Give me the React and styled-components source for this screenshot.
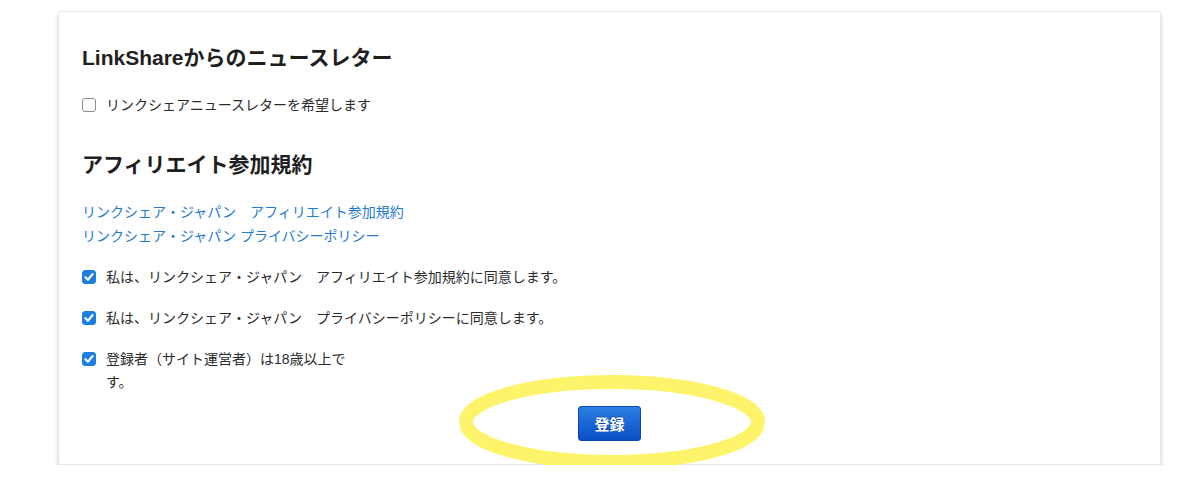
import React from "react";
import styled, { createGlobalStyle } from "styled-components";

const GlobalStyle = createGlobalStyle`
  body {
    margin: 0;
    background: #fff;
    font-family: "Liberation Sans", "Noto Sans CJK JP", sans-serif;
    color: #222;
  }
`;

const Page = styled.div`
  padding: 11px 39px 0 58px;
`;

const Card = styled.section`
  position: relative;
  height: 454px;
  box-sizing: border-box;
  padding: 31px 23px 0;
  background: #fff;
  border: 1px solid #e6e6e6;
  border-radius: 3px;
  box-shadow: 0 3px 4px rgba(0, 0, 0, 0.18);
`;

const Heading = styled.h2`
  margin: ${(p) => p.$top || 0}px 0 0;
  font-size: 21px;
  line-height: 30px;
  font-weight: 700;
  color: #1f1f1f;
`;

const Row = styled.label`
  display: flex;
  align-items: flex-start;
  gap: 10px;
  margin-top: ${(p) => p.$top || 18}px;
  font-size: 14px;
  line-height: 23px;
  color: #2b2b2b;
`;

const Box = styled.span`
  flex: none;
  width: 14px;
  height: 14px;
  margin-top: 4px;
  box-sizing: border-box;
  border-radius: 3px;
  display: flex;
  align-items: center;
  justify-content: center;
  background: ${(p) => (p.$checked ? "#1d7fe2" : "#fff")};
  border: 1px solid ${(p) => (p.$checked ? "#1d7fe2" : "#8a8a8a")};
`;

const LabelText = styled.span`
  max-width: ${(p) => p.$max || "none"};
`;

const Links = styled.div`
  margin-top: 20px;
  display: flex;
  flex-direction: column;
`;

const Link = styled.a`
  font-size: 14px;
  line-height: 24px;
  color: #1f7bd6;
  text-decoration: none;
`;

const Actions = styled.div`
  display: flex;
  justify-content: center;
  margin-top: 12px;
`;

const Annotated = styled.div`
  position: relative;
`;

const Button = styled.button`
  width: 63px;
  height: 35px;
  border: 1px solid #0b47b0;
  border-radius: 3px;
  background: linear-gradient(#2b7fe3, #0a4fc6);
  color: #fff;
  font-family: inherit;
  font-size: 15px;
  font-weight: 700;
  text-shadow: 0 -1px 0 rgba(0, 0, 0, 0.3);
  cursor: pointer;
`;

const Circle = styled.svg`
  position: absolute;
  left: -119px;
  top: -31px;
  pointer-events: none;
`;

function Check({ checked }) {
  return (
    <Box $checked={checked}>
      {checked && (
        <svg width="10" height="10" viewBox="0 0 9 9">
          <path d="M1.3 4.8 L3.5 7 L7.8 1.8" fill="none" stroke="#fff" strokeWidth="1.9" strokeLinecap="round" strokeLinejoin="round" />
        </svg>
      )}
    </Box>
  );
}

export default function App() {
  return (
    <Page>
      <GlobalStyle />
      <Card>
        <Heading>LinkShareからのニュースレター</Heading>
        <Row $top={21}>
          <Check />
          <LabelText>リンクシェアニュースレターを希望します</LabelText>
        </Row>

        <Heading $top={33}>アフィリエイト参加規約</Heading>
        <Links>
          <Link href="#">リンクシェア・ジャパン　アフィリエイト参加規約</Link>
          <Link href="#">リンクシェア・ジャパン プライバシーポリシー</Link>
        </Links>

        <Row>
          <Check checked />
          <LabelText>私は、リンクシェア・ジャパン　アフィリエイト参加規約に同意します。</LabelText>
        </Row>
        <Row>
          <Check checked />
          <LabelText>私は、リンクシェア・ジャパン　プライバシーポリシーに同意します。</LabelText>
        </Row>
        <Row>
          <Check checked />
          <LabelText $max="246px">登録者（サイト運営者）は18歳以上です。</LabelText>
        </Row>

        <Actions>
          <Annotated>
            <Button>登録</Button>
            <Circle width="306" height="94" viewBox="0 0 306 94">
              <ellipse cx="153" cy="47" rx="146" ry="40" fill="none" stroke="#fdf46c" strokeWidth="14" />
            </Circle>
          </Annotated>
        </Actions>
      </Card>
    </Page>
  );
}
